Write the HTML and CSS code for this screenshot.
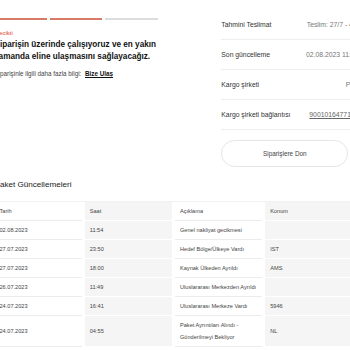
FILE: index.html
```html
<!DOCTYPE html>
<html lang="tr">

<head>
    <meta charset="UTF-8">
    <meta name="viewport" content="width=device-width, initial-scale=1.0">
    <title>Sipariş Takibi</title>
    <link rel="stylesheet" href="styles.css">
</head>

<body>
    <div class="page">
        <!-- Top: status on the left, shipment details on the right -->
        <div class="top">
            <div class="status">
                <div class="progress">
                    <span class="step done"></span>
                    <span class="step done"></span>
                    <span class="step"></span>
                </div>
                <div class="status-label">Gecikti</div>
                <h1 class="status-title">Siparişin üzerinde çalışıyoruz ve en yakın zamanda eline ulaşmasını sağlayacağız.</h1>
                <p class="status-info">Siparişinle ilgili daha fazla bilgi: <a href="#" class="contact">Bize Ulaş</a></p>
            </div>

            <div class="details">
                <div class="detail-row">
                    <span class="detail-label">Tahmini Teslimat</span>
                    <span class="detail-value">Teslim: 27/7 - 4/8</span>
                </div>
                <div class="detail-row">
                    <span class="detail-label">Son güncelleme</span>
                    <span class="detail-value">02.08.2023 11:54</span>
                </div>
                <div class="detail-row">
                    <span class="detail-label">Kargo şirketi</span>
                    <span class="detail-value">PTT</span>
                </div>
                <div class="detail-row">
                    <span class="detail-label">Kargo şirketi bağlantısı</span>
                    <a href="#" class="detail-value link">9001016477190</a>
                </div>
                <button class="back-btn">Siparişlere Don</button>
            </div>
        </div>

        <!-- Package updates table -->
        <h2 class="updates-title">Paket Güncellemeleri</h2>
        <table class="updates">
            <tr>
                <td>Tarih</td>
                <td>Saat</td>
                <td>Açıklama</td>
                <td>Konum</td>
            </tr>
            <tr>
                <td>02.08.2023</td>
                <td>11:54</td>
                <td>Genel nakliyat gecikmesi</td>
                <td></td>
            </tr>
            <tr>
                <td>27.07.2023</td>
                <td>23:50</td>
                <td>Hedef Bölge/Ülkeye Vardı</td>
                <td>IST</td>
            </tr>
            <tr>
                <td>27.07.2023</td>
                <td>18:00</td>
                <td>Kaynak Ülkeden Ayrıldı</td>
                <td>AMS</td>
            </tr>
            <tr>
                <td>26.07.2023</td>
                <td>11:49</td>
                <td>Uluslararası Merkezden Ayrıldı</td>
                <td></td>
            </tr>
            <tr>
                <td>24.07.2023</td>
                <td>16:41</td>
                <td>Uluslararası Merkeze Vardı</td>
                <td>5946</td>
            </tr>
            <tr>
                <td>24.07.2023</td>
                <td>04:55</td>
                <td>Paket Ayrıntıları Alındı - Gönderilmeyi Bekliyor</td>
                <td>NL</td>
            </tr>
        </table>
    </div>
</body>

</html>
```

FILE: styles.css
```css
body {
    margin: 0;
    font-family: "Liberation Sans", Arial, sans-serif;
    background-color: #fff;
    color: #333;
    overflow: hidden;
}

.page {
    margin-left: -5.5px;
    width: 364px;
}

.top {
    display: flex;
    gap: 61px;
}

/* Left: order status */
.status {
    width: 168px;
    padding-top: 18px;
}

.progress {
    display: flex;
    gap: 2.5px;
    width: 163px;
}

.step {
    flex: 1;
    height: 2px;
    background-color: #dcdcdc;
}

.step.done {
    background-color: #d87a65;
}

.status-label {
    margin-top: 10px;
    font-size: 6px;
    color: #e04a33;
}

.status-title {
    margin: 3px 0 0;
    font-size: 8.2px;
    line-height: 12px;
    font-weight: bold;
    color: #111;
}

.status-info {
    margin: 7px 0 0;
    font-size: 6.3px;
    color: #444;
}

.contact {
    margin-left: 2px;
    color: #111;
    font-weight: bold;
}

/* Right: shipment details */
.details {
    width: 139px;
    padding-top: 10px;
}

.detail-row {
    display: flex;
    justify-content: space-between;
    align-items: center;
    height: 29px;
    border-bottom: 1px solid #eee;
    font-size: 6.8px;
}

.detail-label {
    color: #333;
}

.detail-value {
    color: #777;
    white-space: nowrap;
}

.detail-value.link {
    color: #666;
}

.back-btn {
    display: block;
    width: 127px;
    height: 27px;
    margin-top: 10px;
    border: 1px solid #e6e6e6;
    border-radius: 14px;
    background-color: #fff;
    font-family: inherit;
    font-size: 6.4px;
    color: #444;
}

/* Package updates */
.updates-title {
    margin: 13px 0 0;
    font-size: 8.1px;
    font-weight: normal;
    color: #222;
}

.updates {
    width: 364px;
    margin-top: 12px;
    table-layout: fixed;
    border-collapse: separate;
    border-spacing: 3px 0;
    margin-left: -3px;
    border-top: 1px solid #f2f2f2;
}

.updates td {
    padding: 3px 5px;
    font-size: 5.6px;
    line-height: 12px;
    color: #444;
    border-bottom: 1px solid #ececec;
    vertical-align: middle;
}

.updates td:nth-child(even) {
    background-color: #f5f5f5;
    border-bottom-color: #fff;
}
```
